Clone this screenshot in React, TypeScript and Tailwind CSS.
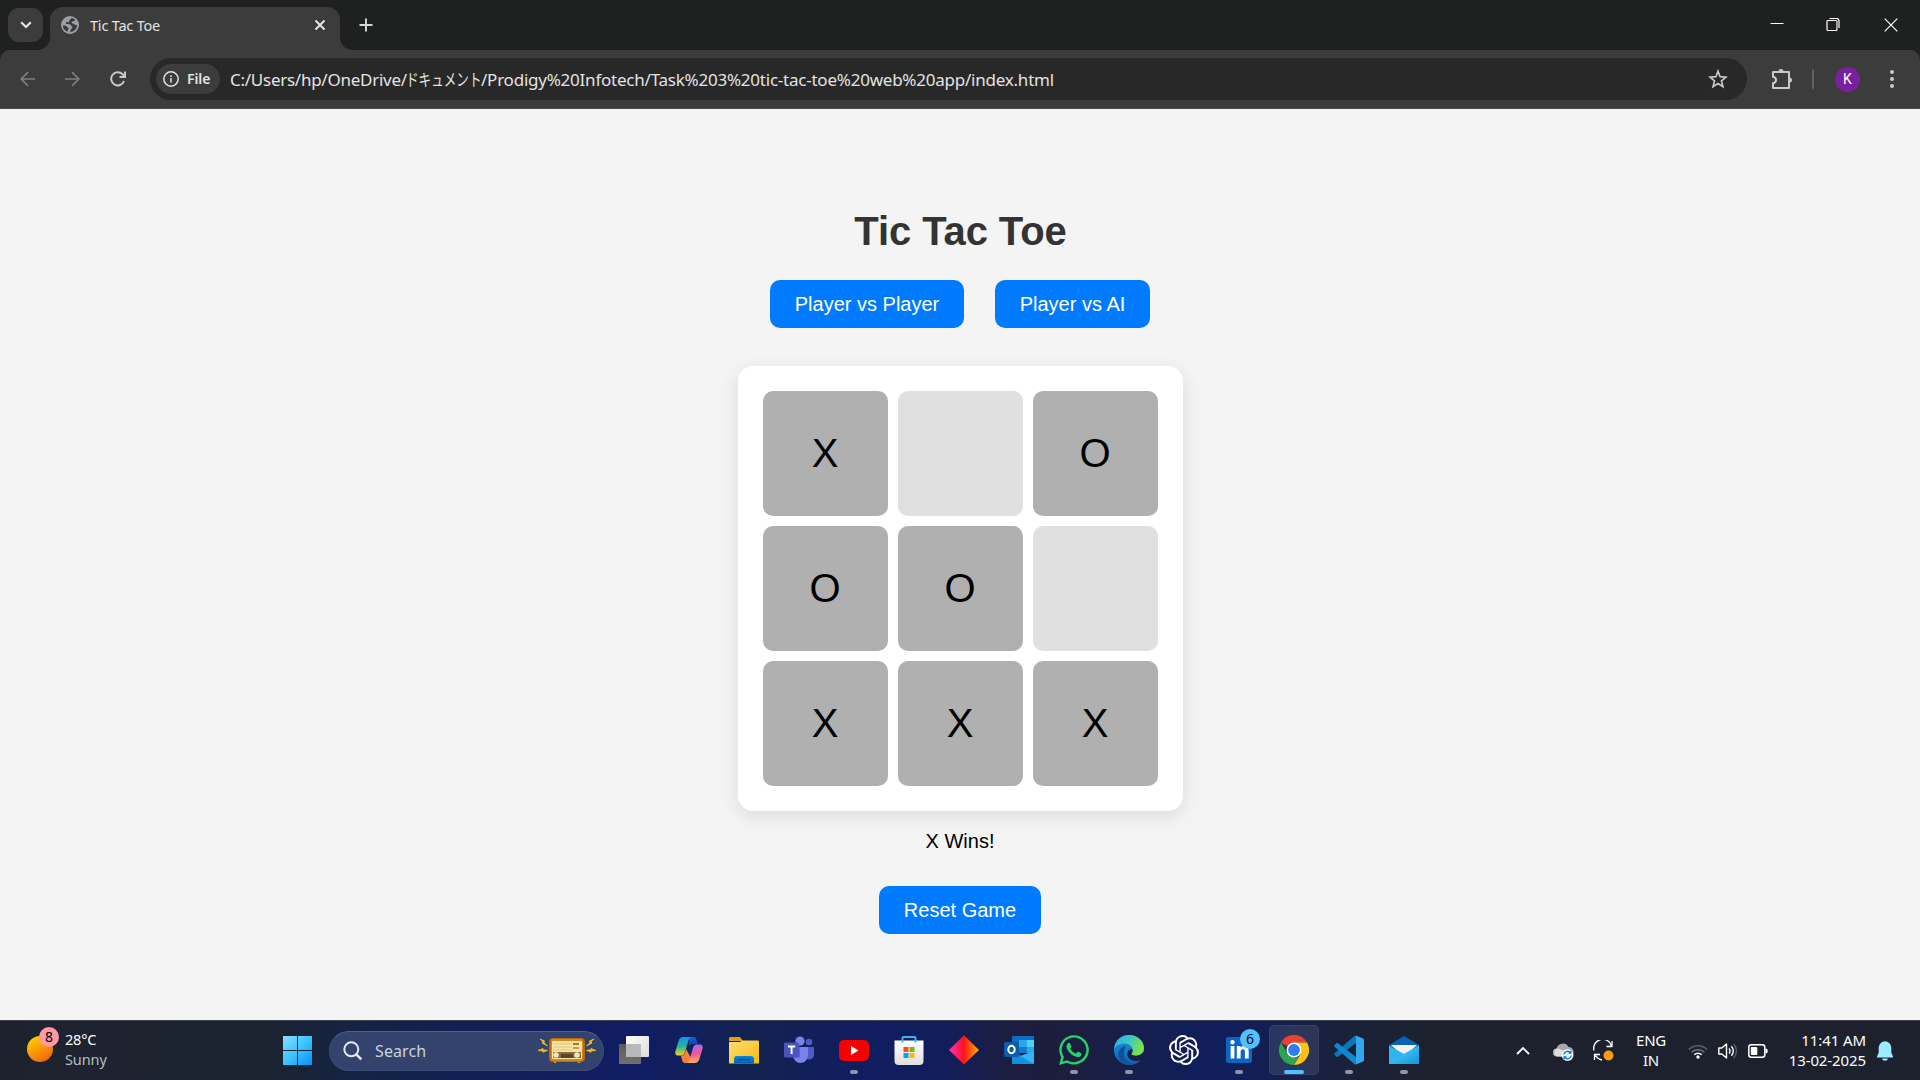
import type { ReactNode } from 'react';
import { SiOpenai } from 'react-icons/si';
import { FaWhatsapp, FaLinkedinIn } from 'react-icons/fa';

const cells = ['X', '', 'O', 'O', 'O', '', 'X', 'X', 'X'];

function TabStrip() {
  return (
    <div className="flex h-[50px] items-start bg-[#1f2120]">
      <div className="mt-2 ml-2 flex h-[34px] w-[35px] items-center justify-center rounded-[11px] bg-[#3c3c3c]">
        <svg width="12" height="8" viewBox="0 0 12 8" fill="none" stroke="#e3e3e3" strokeWidth="2.2">
          <path d="M1.2 1.2 6 6l4.8-4.8" />
        </svg>
      </div>
      <svg width="13" height="13" viewBox="0 0 13 13" className="mt-[37px] ml-[-6px] mr-0 w-[13px]">
        <path d="M13 0v13H0C7 13 13 8 13 0Z" fill="#3c3c3c" />
      </svg>
      <div className="mt-[7px] flex h-[43px] w-[290px] items-center rounded-t-[13px] bg-[#3c3c3c] pb-[7px] pl-[11px]">
        <svg width="18" height="18" viewBox="0 0 18 18">
          <circle cx="9" cy="9" r="9" fill="#9aa0a6" />
          <path
            d="M10.5 1.8c-.2 1.5-1.4 1.5-2 2.2-.6.8.2 1.8-.8 2.2-1 .3-1.600-.6-2.500 0-.8.700-.3 1.800.7 1.900 1.700.2 3.500-.1 4 1.200.4 1.200 1.700.8 1.500 2.200-.2 1.300-1.700 1.200-1.700 2.500 0 .9-.4 1.600-.8 2.200a7.200 7.200 0 0 0 7.200-7.200c-1.400.2-2.500 0-3.200-.9-.6-.8-1.600-.4-2-1.200-.5-1 .6-1.700 1.700-1.600 1 0 1.500-.8 1.300-1.700a7.200 7.200 0 0 0-3.400-1.800Z"
            fill="#3c3c3c"
          />
          <path d="M1.800 9.600c1.600-.2 3.200.2 4 1 .8.900 1.800.8 1.700 2-.1 1-.9 1.400-.9 3.200a7.200 7.200 0 0 1-4.800-6.200Z" fill="#3c3c3c" />
        </svg>
        <span className="ml-[11px] w-[216px] text-[14.500px] leading-5 tracking-[-0.2px] text-[#e3e3e3]">Tic Tac Toe</span>
        <svg width="12" height="12" viewBox="0 0 12 12" className="ml-[8px]" stroke="#e8e8e8" strokeWidth="1.900">
          <path d="M1.500 1.500l9 9M10.500 1.500l-9 9" />
        </svg>
      </div>
      <svg width="13" height="13" viewBox="0 0 13 13" className="mt-[37px]">
        <path d="M0 0v13h13C6 13 0 8 0 0Z" fill="#3c3c3c" />
      </svg>
      <svg width="14" height="14" viewBox="0 0 14 14" className="mt-[18px] ml-[6px]" stroke="#d8d8d8" strokeWidth="1.900">
        <path d="M7 .5v13M.5 7h13" />
      </svg>
      <div className="ml-auto flex h-[50px] items-start text-white">
        <svg width="14" height="14" viewBox="0 0 14 14" className="mt-[17px] mr-[42px]" stroke="white">
          <path d="M.5 6.500h13" />
        </svg>
        <svg width="14" height="14" viewBox="0 0 14 14" className="mt-[18px] mr-[44px]" fill="none" stroke="white">
          <path d="M3.500.5h7a2.500 2.500 0 0 1 2.500 2.500v7" strokeWidth="1.200" />
          <rect x="1" y="2.500" width="10" height="10" rx="1" strokeWidth="1.200" />
          <path d="M11.600 3v8" stroke="#8a8a8a" />
        </svg>
        <svg width="14" height="14" viewBox="0 0 14 14" className="mt-[18px] mr-[22px]" stroke="white" strokeWidth="1.200">
          <path d="M.7.7l12.600 12.600M13.300.7.7 13.300" />
        </svg>
      </div>
    </div>
  );
}

function Toolbar() {
  return (
    <div className="bg-[#1f2120]">
      <div className="flex h-[59px] items-center rounded-t-[10px] border-b border-[#4a4747] bg-[#3c3c3c]">
        <svg width="16" height="16" viewBox="0 0 16 16" className="ml-5" fill="none" stroke="#7d7d7d" strokeWidth="1.700">
          <path d="M15 8H1.500M8 1.200 1.200 8 8 14.800" />
        </svg>
        <svg width="16" height="16" viewBox="0 0 16 16" className="ml-[28px]" fill="none" stroke="#7d7d7d" strokeWidth="1.700">
          <path d="M1 8h13.500M8 1.200 14.800 8 8 14.800" />
        </svg>
        <svg width="16" height="16" viewBox="0 0 16 16" className="ml-[30px]" fill="none" stroke="#c9c9c9" strokeWidth="2">
          <path d="M14 10A6.600 6.600 0 1 1 12.600 3.300L14.500 5.200" />
          <path d="M15 .5v5.500H9.500" />
        </svg>
        <div className="ml-[24px] flex h-[42px] w-[1597px] items-center rounded-full bg-[#282828]">
          <div className="ml-[6px] flex h-[30px] w-[64px] items-center rounded-full bg-[#3c3c3c] pl-[7px]">
            <svg width="16" height="16" viewBox="0 0 16 16" fill="none" stroke="#e3e3e3" strokeWidth="1.500">
              <circle cx="8" cy="8" r="7.200" />
              <path d="M8 7v4.600M8 4.200v1.700" />
            </svg>
            <span className="ml-2 text-[14px] leading-5 font-semibold tracking-[-0.1px] text-[#e3e3e3]">File</span>
          </div>
          <div className="ml-[10px] flex pt-px text-[17px] leading-6 whitespace-nowrap text-[#e3e3e3]">
            <span className="w-[176px] tracking-[-0.26px]">C:/Users/hp/OneDrive/</span>
            <span className="w-[75px]">
              <span className="inline-block origin-left scale-x-[0.740]">ドキュメント</span>
            </span>
            <span className="tracking-[-0.23px]">/Prodigy%20Infotech/Task%203%20tic-tac-toe%20web%20app/index.html</span>
          </div>
          <svg width="20" height="20" viewBox="0 0 20 20" className="mr-[19px] ml-auto" fill="none" stroke="#c9c9c9" strokeWidth="1.700">
            <path d="M10 2.200l2.100 5.500 5.900.4-4.500 3.800 1.400 5.700L10 14.500l-4.900 3.100 1.400-5.700L2 8.100l5.900-.4Z" />
          </svg>
        </div>
        <svg width="22" height="22" viewBox="0 0 22 22" className="ml-[24px]" fill="none" stroke="#c9c9c9" strokeWidth="2" strokeLinejoin="round">
          <path d="M2 4h16v16H2v-5a3 3 0 0 0 0-6Z" />
          <path d="M7.500 3.500a2.500 2.500 0 0 1 5 0ZM18.500 9.500a2.500 2.500 0 0 1 0 5Z" fill="#c9c9c9" stroke="none" />
        </svg>
        <div className="ml-[19px] h-5 w-[2px] rounded bg-[#616161]" />
        <div className="ml-[21px] flex size-[25px] items-center justify-center rounded-full bg-[#7b1fa2] font-['Roboto'] text-[14px] leading-none text-white">K</div>
        <svg width="4" height="18" viewBox="0 0 4 18" className="ml-[30px]" fill="#c9c9c9">
          <circle cx="2" cy="2" r="2" />
          <circle cx="2" cy="9" r="2" />
          <circle cx="2" cy="16" r="2" />
        </svg>
      </div>
    </div>
  );
}

function BlueButton({ children, className }: { children: ReactNode; className: string }) {
  return (
    <button className={`flex h-12 items-center justify-center rounded-[10px] bg-[#007bff] text-[20px] whitespace-nowrap text-white ${className}`}>
      {children}
    </button>
  );
}

function Game() {
  return (
    <main className="flex h-[911px] flex-col items-center bg-[#f4f4f4] pt-[99px] font-['Liberation_Sans',sans-serif] text-black">
      <h1 className="pl-px text-[40px] leading-[46px] font-bold tracking-[-0.1px] text-[#333]">Tic Tac Toe</h1>
      <div className="mt-[26px] flex gap-[31px]">
        <BlueButton className="w-[194px]">Player vs Player</BlueButton>
        <BlueButton className="w-[155px]">Player vs AI</BlueButton>
      </div>
      <div className="mt-[38px] ml-px grid grid-cols-3 gap-[10px] rounded-[15px] bg-white p-[25px] shadow-[0_5px_19px_rgba(0,0,0,0.1)]">
        {cells.map((mark, i) => (
          <div
            key={i}
            className={`flex size-[125px] items-center justify-center rounded-[10px] pr-px pb-[2px] text-[40px] leading-none ${mark ? 'bg-[#b0b0b0]' : 'bg-[#e0e0e0]'}`}
          >
            {mark}
          </div>
        ))}
      </div>
      <p className="mt-[18px] text-[20px] leading-6">X Wins!</p>
      <BlueButton className="mt-[33px] w-[162px]">Reset Game</BlueButton>
    </main>
  );
}

function RadioIcon() {
  return (
    <svg width="58" height="26" viewBox="0 0 58 26">
      <path
        d="M2 1l4.500 2-.5 1.500L9.500 8 4 5l1-1.200ZM0 12.500l5-2v1.300l4.500.5-4.500 2v-1.300ZM56 1l-4.500 2 .5 1.500L48.500 8 54 5l-1-1.200ZM58 12.500l-5-2v1.300l-4.500.5 4.500 2v-1.300Z"
        fill="#f5c21b"
        stroke="#f5c21b"
        strokeWidth=".8"
      />
      <path d="M15 22h4l-1 3h-2ZM39 22h4l-1 3h-2Z" fill="#e0a13c" />
      <rect x="11" y="0" width="36" height="24" rx="4" fill="#b86a0c" />
      <rect x="13" y="1" width="32" height="22" rx="2" fill="#d08a24" />
      <rect x="14" y="3" width="30" height="18" rx="1" fill="#f7e3a4" />
      <path d="M15 6h19M15 9h19M15 12h19" stroke="#e3c878" />
      <rect x="35" y="5" width="6" height="2" fill="#a8742c" />
      <rect x="35" y="9" width="6" height="2" fill="#c99a4c" />
      <rect x="15" y="14" width="28" height="6" fill="#8a6a3c" />
      <rect x="23" y="16" width="12" height="4" fill="#5b4528" />
      <circle cx="18" cy="17" r="2.800" fill="#f6e3b4" />
      <circle cx="39" cy="17" r="2.800" fill="#f6e3b4" />
    </svg>
  );
}

function Gradient({ id, from, to, x2 = '0', y2 = '1', mid }: { id: string; from: string; to: string; x2?: string; y2?: string; mid?: string }) {
  return (
    <linearGradient id={id} x1="0" y1="0" x2={x2} y2={y2}>
      <stop offset="0" stopColor={from} />
      {mid && <stop offset=".5" stopColor={mid} />}
      <stop offset="1" stopColor={to} />
    </linearGradient>
  );
}

function Glyph({ children }: { children: ReactNode }) {
  return (
    <svg width="30" height="30" viewBox="0 0 30 30">
      {children}
    </svg>
  );
}

const taskView = (
  <Glyph>
    <defs>
      <Gradient id="tvA" from="#5c5c5c" to="#707070" />
      <Gradient id="tvB" from="#ffffff" to="#dcdcdc" x2="1" />
    </defs>
    <rect x="0" y="9" width="22" height="20" rx="1" fill="url(#tvA)" />
    <rect x="7" y="1" width="23" height="21" rx="1" fill="url(#tvB)" />
    <rect x="7" y="9" width="15" height="13" fill="#b9b9b9" />
  </Glyph>
);

const copilot = (
  <Glyph>
    <defs>
      <Gradient id="cpA" from="#1b8df0" mid="#26b59a" to="#f2d21f" />
      <Gradient id="cpB" from="#a96be8" mid="#f0569c" to="#ffb057" />
      <Gradient id="cpC" from="#1b5fd8" to="#0a3fb0" />
    </defs>
    <path d="M15 2h4.500c2 0 2.600 1.500 3.200 3.500l1 3.500h-5c-2 0-3 1-3.600 3Z" fill="url(#cpC)" />
    <path d="M9.500 2H18c-2 0-3 1.500-3.500 3.500L11 17c-.8 2.500-1.800 3.600-4 3.600H4.500C1.500 20.600.8 18.500 1.500 16L4.600 6C5.400 3.300 7 2 9.500 2Z" fill="url(#cpA)" />
    <path d="M7 21c2.500 0 3.500-1.500 4.200-4l1-3 4.800 9c-.7 2.700-1.500 5-4.500 5h-1.500c-2 0-2.600-1.300-3-3.500Z" fill="#f5803e" />
    <path d="M20.500 28H12c2 0 3-1.500 3.500-3.500L19 13c.8-2.500 1.800-3.600 4-3.600h2.500c3 0 3.700 2.100 3 4.600L25.400 24c-.8 2.700-2.400 4-4.900 4Z" fill="url(#cpB)" />
  </Glyph>
);

const folder = (
  <Glyph>
    <defs>
      <Gradient id="fdA" from="#ffdf70" to="#f9b913" x2="1" />
      <Gradient id="fdB" from="#0d84dc" to="#0564b0" />
    </defs>
    <path d="M0 3.500C0 2.600.6 2 1.500 2H10c1 0 1.500.5 2.200 1.500L14 6H0Z" fill="#e0a010" />
    <path d="M0 7h11l2-1.500h15.500c1 0 1.500.5 1.500 1.500v21.500H0Z" fill="url(#fdA)" />
    <path d="M5 28.500V24c0-2 1.200-3 3-3h14c1.800 0 3 1 3 3v4.500Z" fill="url(#fdB)" />
    <path d="M9 24.500h12" stroke="#064f8f" strokeWidth="1.300" />
  </Glyph>
);

const teams = (
  <Glyph>
    <circle cx="25" cy="7" r="3.300" fill="#5059c9" />
    <path d="M20 12h9c.6 0 1 .4 1 1v6.500a5 5 0 0 1-9 3Z" fill="#5059c9" />
    <circle cx="16" cy="6" r="4.600" fill="#7b83eb" />
    <path d="M9 12h14c.6 0 1 .4 1 1v7.500a7.500 7.500 0 0 1-15 0Z" fill="#7b83eb" />
    <path d="M10 10h6v12.500h-7Z" fill="#3940a0" opacity=".45" />
    <rect x="0" y="7.500" width="15" height="15" rx="1.500" fill="#4b53bc" />
    <path d="M4 11.500h7.200M7.600 11.500V19" stroke="white" strokeWidth="1.900" />
  </Glyph>
);

const youtube = (
  <Glyph>
    <rect x="0" y="5" width="30" height="21" rx="5" fill="#f60002" />
    <path d="M12 11v9l7.500-4.500Z" fill="white" />
  </Glyph>
);

const store = (
  <Glyph>
    <defs>
      <Gradient id="stA" from="#ffffff" to="#dedede" />
    </defs>
    <path d="M8.500 7V3c0-.6.400-1 1-1h11c.6 0 1 .4 1 1v4" stroke="#35b5ee" strokeWidth="2" fill="none" />
    <path d="M.5 5.500h29V26c0 2.500-1.500 4-4 4h-21c-2.500 0-4-1.500-4-4Z" fill="url(#stA)" />
    <path d="M8.500 5V7.500M21.500 5V7.500" stroke="#35b5ee" strokeWidth="2" />
    <path d="M9.500 12h5v5h-5Z" fill="#f25022" />
    <path d="M15.500 12h5v5h-5Z" fill="#7fba00" />
    <path d="M9.500 18h5v5h-5Z" fill="#00a4ef" />
    <path d="M15.500 18h5v5h-5Z" fill="#ffb900" />
  </Glyph>
);

const diamond = (
  <Glyph>
    <defs>
      <Gradient id="dmA" from="#ff2fc0" mid="#fb1417" to="#ffae00" x2="1" y2="0" />
    </defs>
    <path d="M15 .2 30 15 15 29.500 0 15Z" fill="url(#dmA)" />
  </Glyph>
);

const outlook = (
  <Glyph>
    <path d="M9 1h20c.6 0 1 .4 1 1v15H8V2c0-.6.400-1 1-1Z" fill="#0f6cc0" />
    <path d="M15 5h7.500v7H15Z" fill="#28a8ea" />
    <path d="M22.500 5H30v7h-7.500Z" fill="#50d0f8" />
    <path d="M15 12h7.500v6H15Z" fill="#0f78d4" />
    <path d="M22.500 12H30v6h-7.500Z" fill="#28a8ea" />
    <path d="M8 15l11 7 11-6v12c0 .6-.4 1-1 1H9c-.6 0-1-.4-1-1Z" fill="#1590df" />
    <path d="M30 16v13L16 21Z" fill="#36b3f2" />
    <rect x="0" y="7" width="15" height="15" rx="1.500" fill="#0b5cab" />
    <ellipse cx="7.500" cy="14.500" rx="3.200" ry="3.700" fill="none" stroke="white" strokeWidth="2" />
  </Glyph>
);

const edge = (
  <Glyph>
    <defs>
      <Gradient id="egA" from="#2fa9e8" mid="#36c7c9" to="#7fe04a" x2="1" y2=".35" />
      <Gradient id="egB" from="#1797dc" to="#0c62b8" />
      <Gradient id="egC" from="#0f4a8c" to="#1160b0" x2="1" />
    </defs>
    <circle cx="15" cy="15" r="15" fill="url(#egB)" />
    <path d="M10 19c0 6 5.500 9 11 8.500 3-.3 5-1.700 6-3l.6-.8C25 27.700 20.500 30 15 30 8 29.700 4.500 25 4.500 20c0-5 3-8.500 7.500-9.500-1.300 2-2 5-2 8.500Z" fill="url(#egC)" />
    <path d="M0 14C.8 5.500 7 0 15 0c8.500 0 15 6 15 13 0 5-3.800 7.700-8 7.700-3 0-4.800-1-4.800-2 0-.8 1.300-1.500 1.300-3.700 0-3.500-3-6.500-8-6.500C5.500 8.500 1.500 11 0 14Z" fill="url(#egA)" />
    <path d="M17.200 18.700c0 1 1.800 2 4.800 2 3 0 5.600-1.200 7-3.400L30.500 17a15 15 0 0 1-2.500 6.700l-.6.800c-1.500 1-3.500 1.500-5.500 1.500-5 0-8.600-3.200-8.600-7 0-2.700 1.800-4.700 4.700-5.200.7 1 .9 2.500.3 3.500-.3.500-.6.900-.6 1.400Z" fill="#151f4e" />
  </Glyph>
);

const linkedin = (
  <div className="relative flex h-[26px] w-[26px] items-center justify-center rounded-[2px] bg-[#0a66c2]">
    <FaLinkedinIn size={21} color="white" />
    <div className="absolute top-[-8px] left-[14px] flex size-5 items-center justify-center rounded-full bg-[#4cc2ff] text-[14px] leading-none text-black">6</div>
  </div>
);

const chrome = (
  <Glyph>
    <path d="M15 15 2 7.500A15 15 0 0 1 28 7.500H15Z" fill="#e94235" />
    <path d="M15 7.500h13A15 15 0 0 1 15 30l6.500-11.200Z" fill="#fbc116" />
    <path d="M2 7.500l6.500 11.300L15 22.500h4.300L15 30A15 15 0 0 1 2 7.500Z" fill="#2da44f" />
    <circle cx="15" cy="15" r="7.500" fill="white" />
    <circle cx="15" cy="15" r="5.900" fill="#2f7de9" />
  </Glyph>
);

const vscode = (
  <Glyph>
    <path d="M22 .5 29 3.500c.6.300 1 .8 1 1.500v20c0 .7-.4 1.200-1 1.500l-7 3Z" fill="#2fa8ee" />
    <path d="M22 .5V8L4 21.800c-.5.400-1 .4-1.500 0L.6 20c-.6-.6-.6-1.200 0-1.800L20 1.200c.6-.5 1.300-.8 2-.7Z" fill="#0b76b8" />
    <path d="M22 29.500V22L4 8.200c-.5-.4-1-.4-1.500 0L.6 10c-.6.600-.6 1.200 0 1.800L20 28.800c.6.500 1.300.8 2 .7Z" fill="#1287cf" />
  </Glyph>
);

const mail = (
  <Glyph>
    <defs>
      <Gradient id="mlA" from="#50dcff" to="#1594dd" x2="1" />
    </defs>
    <path d="M0 10 15 1l15 9v3H0Z" fill="#0b5fb4" />
    <path d="M2 10h26L15 22Z" fill="#f2f2f2" />
    <path d="M0 10.500 15 19l15-8.500V29H0Z" fill="#2fb5f0" />
    <path d="M30 10.500V29H0L15 19Z" fill="url(#mlA)" />
  </Glyph>
);

const apps: { name: string; icon: ReactNode; state?: 'open' | 'active' }[] = [
  { name: 'Task View', icon: taskView },
  { name: 'Copilot', icon: copilot },
  { name: 'File Explorer', icon: folder },
  { name: 'Teams', icon: teams },
  { name: 'YouTube', icon: youtube, state: 'open' },
  { name: 'Store', icon: store },
  { name: 'Diamond', icon: diamond },
  { name: 'Outlook', icon: outlook },
  { name: 'WhatsApp', icon: <FaWhatsapp size={34} color="#25d366" />, state: 'open' },
  { name: 'Edge', icon: edge, state: 'open' },
  { name: 'ChatGPT', icon: <SiOpenai size={30} color="white" /> },
  { name: 'LinkedIn', icon: linkedin, state: 'open' },
  { name: 'Chrome', icon: chrome, state: 'active' },
  { name: 'VS Code', icon: vscode, state: 'open' },
  { name: 'Mail', icon: mail, state: 'open' },
];

function Tray() {
  return (
    <div className="ml-auto flex h-full items-center text-[15px] leading-5 text-white">
      <svg width="14" height="9" viewBox="0 0 14 9" className="mr-[23px]" fill="none" stroke="white" strokeWidth="1.800">
        <path d="M1 8l6-6 6 6" />
      </svg>
      <svg width="21" height="18" viewBox="0 0 21 18" className="mr-[19px] mt-[3px]">
        <path d="M4 13.500a4 4 0 0 1-.5-8A6.500 6.500 0 0 1 15.500 4 4.600 4.600 0 0 1 16 13.500Z" fill="#a8a8a8" />
        <path d="M4.200 13.500a4.200 4.200 0 0 1 0-8c3 0 4.500 1.500 8 3l-2 5Z" fill="#dcdcdc" />
        <circle cx="14.500" cy="12" r="6" fill="#eaf4fd" />
        <path d="M10.800 11.500a3.800 3.800 0 0 1 6.800-1.700M18.200 12.500a3.800 3.800 0 0 1-6.800 1.700M17.900 7.800v2.400h-2.400M11.100 16.200v-2.400h2.400" fill="none" stroke="#1a75c8" strokeWidth="1.300" />
      </svg>
      <svg width="21" height="21" viewBox="0 0 21 21" className="mr-[22px]" fill="none" stroke="white" strokeWidth="1.300">
        <path d="M1 10.500A9 9 0 0 1 18.500 6M19 1v5.500h-5.500M1.500 20v-5.500H7M2.500 15.500A9.500 9.500 0 0 0 9 20" />
        <circle cx="15.500" cy="15.500" r="5" fill="#ff9a0a" stroke="none" />
      </svg>
      <div className="mr-[22px] flex w-[30px] flex-col items-center pb-[2px] tracking-[-0.3px]">
        <div>ENG</div>
        <div>IN</div>
      </div>
      <svg width="20" height="16" viewBox="0 0 20 16" className="mr-[10px]" fill="none" strokeWidth="1.500">
        <path d="M.8 6.500a13 13 0 0 1 18.400 0" stroke="#596070" />
        <path d="M3.700 9.300a9 9 0 0 1 12.600 0" stroke="#747a86" />
        <path d="M6.300 11.800a5.300 5.300 0 0 1 7.400 0" stroke="white" />
        <circle cx="10" cy="14" r="1.700" fill="white" />
      </svg>
      <svg width="20" height="18" viewBox="0 0 20 18" className="mr-[10px]" fill="none" stroke="white" strokeWidth="1.400" strokeLinejoin="round">
        <path d="M.8 6h3L8.500 2v14L3.800 12h-3Z" />
        <path d="M11 6.500a3.500 3.500 0 0 1 0 5M13.300 4.300a6.500 6.500 0 0 1 0 9.400" />
        <path d="M15.600 2a10 10 0 0 1 0 14" stroke="#596070" />
      </svg>
      <svg width="20" height="14" viewBox="0 0 20 14" className="mr-[18px]">
        <rect x=".8" y=".8" width="16" height="12.400" rx="2.500" fill="none" stroke="white" strokeWidth="1.500" />
        <rect x="2.800" y="3" width="6.500" height="8" rx="1" fill="white" />
        <path d="M17.500 4.500c1.500 0 2.200.8 2.200 2.500s-.7 2.500-2.200 2.500Z" fill="white" />
      </svg>
      <div className="mr-[11px] w-[80px] pb-[2px] text-right tracking-[-0.1px] whitespace-nowrap">
        <div>11:41 AM</div>
        <div>13-02-2025</div>
      </div>
      <svg width="16" height="20" viewBox="0 0 16 20" className="mr-[27px]" fill="#99ebff">
        <path d="M8 .3a6.300 6.300 0 0 1 6.300 6.300v5L16 15.500a.7.700 0 0 1-.6 1H.6a.7.700 0 0 1-.6-1l1.700-3.900v-5A6.300 6.300 0 0 1 8 .3ZM5.300 17.500h5.400a2.700 2.200 0 0 1-5.400 0Z" />
      </svg>
    </div>
  );
}

function Taskbar() {
  return (
    <footer className="flex h-[60px] items-center overflow-hidden border-t border-[#40434f] bg-[linear-gradient(90deg,#1d222e_0px,#1c2431_270px,#16233f_330px,#112152_450px,#101d64_640px,#12234f_750px,#101d60_860px,#111e5c_940px,#1c1d40_1010px,#1b1e3f_1080px,#101f5a_1190px,#111e5a_1240px,#1a2138_1350px,#1c212e_1430px,#1c212d_1920px)]">
      <div className="relative mt-[-3px] ml-[27px] size-[26px] rounded-full bg-[linear-gradient(150deg,#ffd000_10%,#f78a0a_60%,#e55a0c)]">
        <div className="absolute top-[-9px] left-[12px] flex size-5 items-center justify-center rounded-full bg-[#ff99a4] text-[14px] leading-none text-black">8</div>
      </div>
      <div className="ml-[12px] w-[218px] pb-[3px] text-[14.500px] leading-5">
        <div className="tracking-[-0.2px] text-white">28°C</div>
        <div className="tracking-[-0.1px] text-[#b9bdc4]">Sunny</div>
      </div>
      <svg width="29" height="29" viewBox="0 0 29 29">
        <defs>
          <linearGradient id="winA" x1="0" y1="0" x2="1" y2="1">
            <stop offset="0" stopColor="#86e0ff" />
            <stop offset=".5" stopColor="#3cc3ff" />
            <stop offset="1" stopColor="#0a90f8" />
          </linearGradient>
        </defs>
        <path d="M0 0h14v14H0ZM15 0h14v14H15ZM0 15h14v14H0ZM15 15h14v14H15Z" fill="url(#winA)" />
      </svg>
      <div className="ml-[17px] flex h-10 w-[275px] shrink-0 items-center rounded-full border border-[#3d4d7a] border-t-[#4f608c] bg-[#33436d]">
        <svg width="20" height="20" viewBox="0 0 20 20" className="ml-[13px]" fill="none" stroke="#e6e9f0" strokeWidth="2">
          <circle cx="8.300" cy="8.300" r="7" />
          <path d="M13.300 13.300l5 5" strokeWidth="2.600" />
        </svg>
        <span className="ml-[12px] text-[16px] leading-5 tracking-[0.1px] text-[#ccd2de]">Search</span>
        <div className="mr-[7px] ml-auto">
          <RadioIcon />
        </div>
      </div>
      <div className="ml-[2.500px] flex h-full">
        {apps.map((app) => (
          <div
            key={app.name}
            className="flex h-full w-[55px] items-start justify-center pt-[4px]"
          >
            <div className={`flex h-[50px] w-[50px] flex-col items-center rounded-[5px] ${app.state === 'active' ? 'bg-white/10 ring-1 ring-white/5 ring-inset' : ''}`}>
              <div className="mt-[9px] flex h-8 items-center justify-center">{app.icon}</div>
              {app.state === 'open' && <div className="mt-[4px] h-1 w-2 rounded-full bg-[#9095a4]" />}
              {app.state === 'active' && <div className="mt-[4px] h-1 w-5 rounded-full bg-[#4cc2ff]" />}
            </div>
          </div>
        ))}
      </div>
      <Tray />
    </footer>
  );
}

export default function App() {
  return (
    <div className="h-[1080px] w-[1920px] overflow-hidden font-['Noto_Sans','Noto_Sans_CJK_JP',sans-serif]">
      <TabStrip />
      <Toolbar />
      <Game />
      <Taskbar />
    </div>
  );
}
